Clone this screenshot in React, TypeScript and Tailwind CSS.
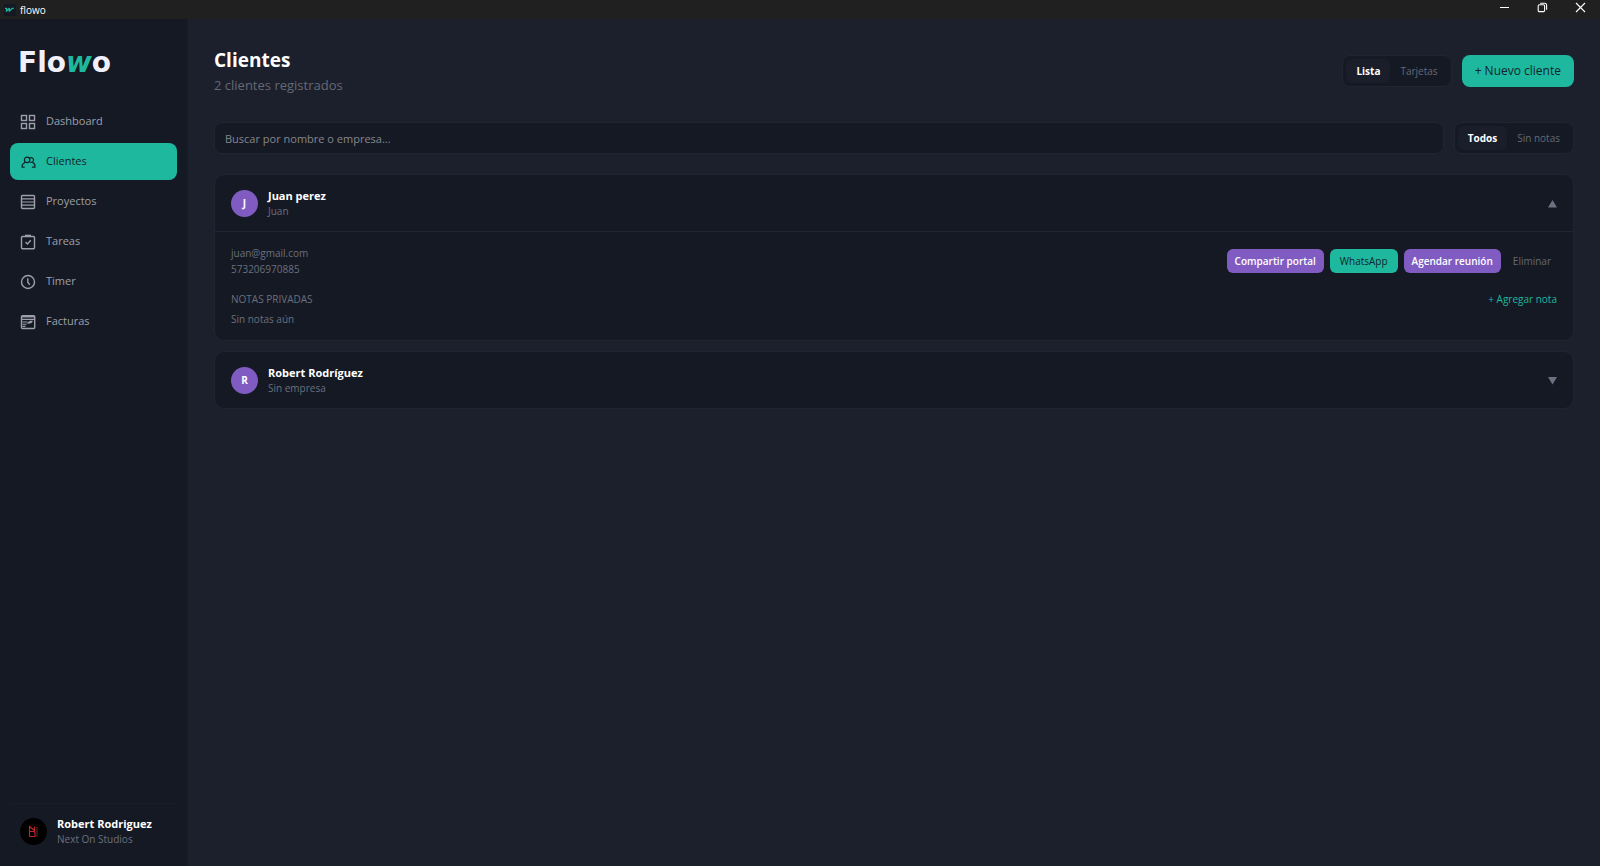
import React, { useState } from 'react';

const clients = [
  { id: 1, name: 'Juan perez', company: 'Juan', email: 'juan@gmail.com', phone: '573206970885' },
  { id: 2, name: 'Robert Rodríguez', company: 'Sin empresa', email: '', phone: '' },
];

const icons: Record<string, React.ReactNode> = {
  Dashboard: (
    <>
      <rect x="1" y="1" width="5" height="5" />
      <rect x="9" y="1" width="5" height="5" />
      <rect x="1" y="9" width="5" height="5" />
      <rect x="9" y="9" width="5" height="5" />
    </>
  ),
  Clientes: (
    <g strokeWidth="1.2">
      <circle cx="6.6" cy="5.4" r="2.7" />
      <path d="M9.2 3.8a2.3 2.3 0 1 1 .6 3.8" />
      <path d="M4.2 12.6H1.6v-.8c0-2 1.2-3.2 3.2-3.8M11.4 12.6h3.1v-.8c0-2.2-1.2-3.4-2.6-3.9" />
    </g>
  ),
  Proyectos: (
    <>
      <rect x="1" y="1" width="13" height="13" rx="1" />
      <path d="M1 4.3h13M1 7.5h13M1 10.7h13" strokeWidth="1.2" />
    </>
  ),
  Tareas: (
    <>
      <rect x="1" y="2" width="13" height="12.3" rx="1" />
      <path d="M4.5 1.2h6" strokeWidth="2" />
      <path d="M5 7.5l1.9 1.9 3.4-3.6" />
    </>
  ),
  Timer: (
    <>
      <circle cx="7.5" cy="7.5" r="6.5" />
      <path d="M7.3 3.8v3.9l2 2.5" />
    </>
  ),
  Facturas: (
    <>
      <rect x="1" y="1.2" width="13.2" height="12.8" rx="1" />
      <path d="M1 2.2h13" />
      <path d="M1 4.9h13M2 7.5h5M2 9.7h4M2 11.9h3" strokeWidth="1.1" />
      <path d="M6.6 9.6l1-2.2 2-1.2h2.9l-1.4 2.4-2.2.4z" fill="currentColor" stroke="none" />
    </>
  ),
};

function NavIcon({ name }: { name: string }) {
  return (
    <svg className="h-4 w-4 shrink-0" viewBox="-0.5 -0.5 16 16" fill="none" stroke="currentColor" strokeWidth="1.4" aria-hidden="true">
      {icons[name]}
    </svg>
  );
}

interface ToggleProps {
  options: string[];
  value: string;
  onChange: (value: string) => void;
}

function Toggle({ options, value, onChange }: ToggleProps) {
  return (
    <div className="flex shrink-0 rounded-lg border border-[#222531] bg-[#151924] p-[3px]">
      {options.map((option) => (
        <button
          key={option}
          onClick={() => onChange(option)}
          className={`h-6 rounded-md px-[10px] text-[10px] ${
            option === value ? 'bg-[#1a1e2a] font-bold text-white' : 'text-[#646974]'
          }`}
        >
          {option}
        </button>
      ))}
    </div>
  );
}

function TitleBar() {
  return (
    <header className="flex h-[19px] shrink-0 items-center justify-between bg-[#202020] text-white">
      <div className="flex items-center gap-1 pl-1">
        <svg className="h-3 w-3" viewBox="0 0 12 12" fill="none" aria-hidden="true">
          <rect width="12" height="12" fill="#151924" />
          <path d="M1 4.3h1.6L2.4 7.2 5.4 4.3 5.2 7.2 8.4 4.3h1.4" stroke="#1eb89f" strokeWidth="1.2" strokeLinejoin="round" />
        </svg>
        <span className="text-[10px] leading-4">flowo</span>
      </div>
      <div className="flex items-center pr-px pb-1">
        <button aria-label="Minimizar" className="flex w-[38px] justify-center">
          <svg className="h-[11px] w-[11px]" viewBox="0 0 11 11" stroke="currentColor">
            <path d="M1 5.5h9" />
          </svg>
        </button>
        <button aria-label="Restaurar" className="flex w-[38px] justify-center">
          <svg className="h-[11px] w-[11px]" viewBox="0 0 11 11" fill="none" stroke="currentColor" strokeWidth="1.1">
            <rect x="1.2" y="2.8" width="6.4" height="6.8" rx="1.2" />
            <path d="M3.2 1.2h4.4a2 2 0 0 1 2 2v4.6" />
          </svg>
        </button>
        <button aria-label="Cerrar" className="flex w-[38px] justify-center">
          <svg className="h-[11px] w-[11px]" viewBox="0 0 11 11" stroke="currentColor" strokeWidth="1.1">
            <path d="M1 1l9 9M10 1l-9 9" />
          </svg>
        </button>
      </div>
    </header>
  );
}

function Sidebar() {
  const [active, setActive] = useState('Clientes');

  return (
    <aside className="flex w-[188px] shrink-0 flex-col border-r border-[#181c28] bg-[#151924] px-[10px] pb-5">
      <div className="flex h-[84px] items-center px-2 pt-1 font-['DejaVu_Sans'] text-[28px] leading-8 font-bold text-[#f0effa]">
        Flo<span className="text-[#1eb89f] italic">w</span>o
      </div>
      <nav className="flex flex-col gap-[3px]">
        {Object.keys(icons).map((name) => (
          <a
            key={name}
            href="#"
            onClick={() => setActive(name)}
            className={`flex h-[37px] items-center gap-[10px] rounded-lg px-[10px] text-[11px] font-medium ${
              name === active ? 'bg-[#1eb89f] text-[#10252b]' : 'text-[#9ca0ab]'
            }`}
          >
            <NavIcon name={name} />
            {name}
          </a>
        ))}
      </nav>
      <div className="mt-auto flex items-center gap-[10px] border-t border-[#191d28] px-[10px] pt-3">
        <svg className="h-[27px] w-[27px] shrink-0" viewBox="0 0 27 27" fill="none" aria-hidden="true">
          <circle cx="13.5" cy="13.5" r="13.5" fill="#000" />
          <path d="M9.5 18.5V8.5l5 4V8.5M9.5 13.5h4.5l1 1.5v3.5H9.5" stroke="#c0262b" strokeWidth="1.1" />
          <path d="M17 9v10" stroke="#6d3034" strokeWidth="1.2" strokeDasharray="1.5 .5" />
        </svg>
        <div>
          <p className="text-[11px] leading-4 font-bold text-white">Robert Rodriguez</p>
          <p className="text-[10px] leading-[14px] text-[#6b707c]">Next On Studios</p>
        </div>
      </div>
    </aside>
  );
}

export default function App() {
  const [view, setView] = useState('Lista');
  const [filter, setFilter] = useState('Todos');
  const [openId, setOpenId] = useState<number | null>(1);
  const [query, setQuery] = useState('');

  return (
    <div className="flex min-h-screen flex-col bg-[#1c1f2c] font-['Open_Sans',sans-serif] text-white">
      <TitleBar />
      <div className="flex flex-1">
        <Sidebar />
        <main className="flex-1 px-[26px] pt-7">
          <div className="flex items-center justify-between">
            <div>
              <h1 className="text-[19px] leading-[26px] font-bold">Clientes</h1>
              <p className="text-[13px] leading-6 text-[#646974]">2 clientes registrados</p>
            </div>
            <div className="mb-[2px] flex gap-[10px]">
              <Toggle options={['Lista', 'Tarjetas']} value={view} onChange={setView} />
              <button className="rounded-lg bg-[#1eb89f] px-[13px] text-xs text-[#10252b]">+ Nuevo cliente</button>
            </div>
          </div>

          <div className="mt-[25px] flex gap-[10px]">
            <input
              type="text"
              aria-label="Buscar por nombre o empresa"
              placeholder="Buscar por nombre o empresa..."
              value={query}
              onChange={(e) => setQuery(e.target.value)}
              className="h-8 min-w-0 flex-1 rounded-lg border border-[#222531] bg-[#151924] px-[10px] text-[11px] font-medium outline-none placeholder:text-[#85878b]"
            />
            <Toggle options={['Todos', 'Sin notas']} value={filter} onChange={setFilter} />
          </div>

          <div className="mt-5 flex flex-col gap-[10px]">
            {clients.map((client) => (
              <section key={client.id} className="rounded-[10px] border border-[#222531] bg-[#151924]">
                <button
                  onClick={() => setOpenId(openId === client.id ? null : client.id)}
                  aria-expanded={openId === client.id}
                  className="flex h-14 w-full items-center gap-[10px] px-4 text-left"
                >
                  <span className="flex h-[27px] w-[27px] items-center justify-center rounded-full bg-[#805cc2] text-[10px] font-bold">
                    {client.name[0]}
                  </span>
                  <span className="flex-1">
                    <span className="block text-[11px] leading-4 font-bold">{client.name}</span>
                    <span className="block text-[10px] leading-[14px] text-[#6b707c]">{client.company}</span>
                  </span>
                  <svg className="h-[9px] w-[9px] text-[#6b7280]" viewBox="0 0 9 9" fill="currentColor" aria-hidden="true">
                    <path d={openId === client.id ? 'M4.5 1L9 8.5H0z' : 'M4.5 8.5L9 1H0z'} />
                  </svg>
                </button>
                {openId === client.id && (
                  <div className="border-t border-[#222531] px-4 py-[13px]">
                    <div className="flex items-center justify-between">
                      <div className="text-[10px] leading-4 text-[#6b707c]">
                        <p>{client.email}</p>
                        <p>{client.phone}</p>
                      </div>
                      <div className="flex gap-[6px] text-[10px]">
                        <button className="h-6 rounded-md bg-[#805cc2] px-2 font-semibold">Compartir portal</button>
                        <button className="h-6 rounded-md bg-[#1eb89f] px-[10px] text-[#10252b]">WhatsApp</button>
                        <button className="h-6 rounded-md bg-[#805cc2] px-2 font-semibold">Agendar reunión</button>
                        <button className="h-6 px-[6px] text-[#646974]">Eliminar</button>
                      </div>
                    </div>
                    <div className="mt-[14px] flex justify-between text-[10px] leading-4">
                      <h2 className="text-[#6b707c]">NOTAS PRIVADAS</h2>
                      <button className="text-[#1eb89f]">+ Agregar nota</button>
                    </div>
                    <p className="mt-1 text-[10px] leading-4 text-[#6b707c]">Sin notas aún</p>
                  </div>
                )}
              </section>
            ))}
          </div>
        </main>
      </div>
    </div>
  );
}
